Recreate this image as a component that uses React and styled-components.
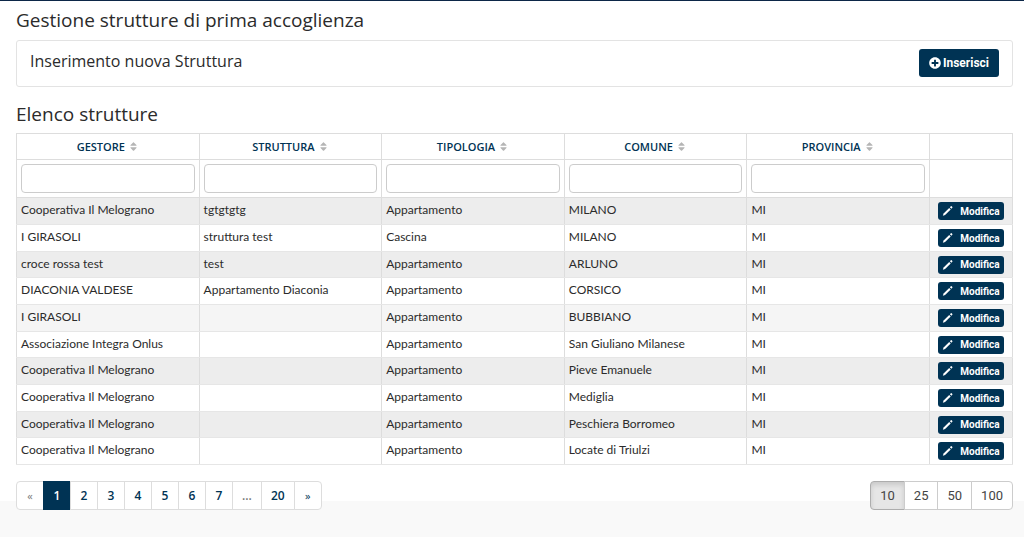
import React from 'react';
import styled, { createGlobalStyle } from 'styled-components';
import { FaPlusCircle, FaSort } from 'react-icons/fa';

const GlobalStyle = createGlobalStyle`
* {
  box-sizing: border-box;
}
body {
  margin: 0;
  background-color: #f9f9f9;
  font-family: "Open Sans", sans-serif;
  color: #2b2b2b;
}
`

const Page = styled.main`
border-top: 1px solid #0c2748;
background: linear-gradient(#fff, #fff) no-repeat top / 100% calc(100% - 9px);
padding: 8px 11px 0 16px;
`

const Title = styled.h1`
margin: 0;
font-size: 19px;
line-height: 23px;
font-weight: 400;
`

const ListTitle = styled(Title).attrs({ as: 'h2' })`
margin: 16px 0 7px;
`

const Panel = styled.section`
display: flex;
justify-content: space-between;
align-items: flex-start;
margin-top: 8px;
padding: 8px 13px 9px;
border: 1px solid #e3e3e3;
border-radius: 3px;
`

const PanelTitle = styled.h2`
margin: 0;
font-size: 16px;
line-height: 25px;
font-weight: 400;
`

const DarkButton = styled.button`
display: inline-flex;
align-items: center;
justify-content: center;
gap: ${props => props.$small ? '6px' : '2px'};
height: ${props => props.$small ? '18px' : '28px'};
padding: ${props => props.$small ? '0 4px' : '0 10px'};
border: 0;
border-radius: 3px;
background-color: #003354;
color: #fff;
font-family: Roboto, sans-serif;
font-size: ${props => props.$small ? '10px' : '12px'};
font-weight: 700;
cursor: pointer;
`

const Table = styled.table`
width: 100%;
table-layout: fixed;
border-collapse: collapse;
border: 1px solid #ddd;
font-family: Lato, sans-serif;
font-size: 12px;
line-height: 16px;
`

const HeaderCell = styled.th`
width: ${props => props.$action ? '83px' : 'auto'};
height: 26px;
padding: 0 4px;
border: 1px solid #ddd;
`

const SortButton = styled.button`
display: inline-flex;
align-items: center;
gap: 3px;
padding: 0;
border: 0;
background: none;
color: #003354;
font-family: "Open Sans", sans-serif;
font-size: 11px;
line-height: 16px;
font-weight: 600;
text-transform: uppercase;
cursor: pointer;
svg {
  color: #b5b5b5;
}
`

const FilterCell = styled.td`
height: 38px;
padding: 0 4px;
border: 1px solid #ddd;
`

const FilterInput = styled.input`
display: block;
width: 100%;
height: 29px;
padding: 0 8px;
border: 1px solid #ccc;
border-radius: 4px;
background-color: #fff;
font: inherit;
`

// rows alternate between 27px and 26px so that ten of them fill 267px
const Row = styled.tr`
height: 27px;
background-color: ${props => props.$hovered ? '#f5f5f5' : '#fff'};
&:nth-child(odd) {
  background-color: ${props => props.$hovered ? '#f5f5f5' : '#ededed'};
}
&:nth-child(3n) {
  height: 26px;
}
`

const Cell = styled.td`
padding: 0 4px 2px;
border: 1px solid #ddd;
border-top-color: #e6e6e6;
border-bottom-color: #e6e6e6;
vertical-align: middle;
white-space: nowrap;
`

const ActionCell = styled(Cell)`
padding: 0 4px;
text-align: center;
button {
  vertical-align: middle;
}
`

const Footer = styled.footer`
display: flex;
justify-content: space-between;
margin-top: 16px;
`

const PageList = styled.ul`
display: flex;
margin: 0;
padding: 0;
list-style: none;
`

const PageLink = styled.a`
display: block;
min-width: 28px;
height: 29px;
margin-right: -1px;
padding: 0 9px;
border: 1px solid ${props => props.$active ? '#003354' : '#ddd'};
border-radius: ${props => props.$edge === 'first' ? '4px 0 0 4px' : props.$edge === 'last' ? '0 4px 4px 0' : '0'};
background-color: ${props => props.$active ? '#003354' : '#fff'};
color: ${props => props.$active ? '#fff' : props.$muted ? '#777' : '#003354'};
font-size: ${props => props.$edge ? '11px' : '12px'};
line-height: 27px;
font-weight: ${props => props.$edge ? '400' : '600'};
text-align: center;
text-decoration: none;
`

const SizeGroup = styled.div`
display: flex;
`

const SizeButton = styled.button`
height: 29px;
margin-left: -1px;
padding: 0 9px;
border: 1px solid ${props => props.$active ? '#adadad' : '#ccc'};
background-color: ${props => props.$active ? '#e6e6e6' : '#fff'};
box-shadow: ${props => props.$active ? 'inset 0 3px 5px rgba(0, 0, 0, 0.125)' : 'none'};
color: #444;
font-family: Roboto, sans-serif;
font-size: 13px;
cursor: pointer;
&:first-child {
  border-radius: 4px 0 0 4px;
}
&:last-child {
  border-radius: 0 4px 4px 0;
}
`

const columns = ['Gestore', 'Struttura', 'Tipologia', 'Comune', 'Provincia']

const strutture = [
    ['Cooperativa Il Melograno', 'tgtgtgtg', 'Appartamento', 'MILANO', 'MI'],
    ['I GIRASOLI', 'struttura test', 'Cascina', 'MILANO', 'MI'],
    ['croce rossa test', 'test', 'Appartamento', 'ARLUNO', 'MI'],
    ['DIACONIA VALDESE', 'Appartamento Diaconia', 'Appartamento', 'CORSICO', 'MI'],
    ['I GIRASOLI', '', 'Appartamento', 'BUBBIANO', 'MI'],
    ['Associazione Integra Onlus', '', 'Appartamento', 'San Giuliano Milanese', 'MI'],
    ['Cooperativa Il Melograno', '', 'Appartamento', 'Pieve Emanuele', 'MI'],
    ['Cooperativa Il Melograno', '', 'Appartamento', 'Mediglia', 'MI'],
    ['Cooperativa Il Melograno', '', 'Appartamento', 'Peschiera Borromeo', 'MI'],
    ['Cooperativa Il Melograno', '', 'Appartamento', 'Locate di Triulzi', 'MI'],
]

const pages = ['«', '1', '2', '3', '4', '5', '6', '7', '...', '20', '»']
const sizes = [10, 25, 50, 100]

function PencilIcon() {
    return (
        <svg width="12" height="12" viewBox="0 0 12 12" fill="currentColor" aria-hidden="true">
            <path d="M.8 10.7l.8-2.3 5.6-5.5 1.5 1.5-5.6 5.5z" />
            <path d="M7.9 2.2l.9-.9a.7.7 0 0 1 .9 0l.6.6a.7.7 0 0 1 0 .9l-.9.9z" />
        </svg>
    )
}

function Pagination(props) {
    return (
        <nav aria-label="Pagine">
            <PageList>
                {pages.map((item, index) => (
                    <li key={index}>
                        <PageLink
                            href="#"
                            $active={item === props.current}
                            $muted={item === '«' || item === '...'}
                            $edge={index === 0 ? 'first' : index === pages.length - 1 ? 'last' : ''}>
                            {item}
                        </PageLink>
                    </li>
                ))}
            </PageList>
        </nav>
    )
}

function App() {
    const [size, setSize] = React.useState(10);

    return (
        <>
            <GlobalStyle />
            <Page>
                <Title>Gestione strutture di prima accoglienza</Title>
                <Panel>
                    <PanelTitle>Inserimento nuova Struttura</PanelTitle>
                    <DarkButton type="button">
                        <FaPlusCircle size={12} />
                        Inserisci
                    </DarkButton>
                </Panel>

                <ListTitle>Elenco strutture</ListTitle>
                <Table>
                    <thead>
                        <tr>
                            {columns.map(name => (
                                <HeaderCell key={name} scope="col">
                                    <SortButton type="button">
                                        {name}
                                        <FaSort size={11} />
                                    </SortButton>
                                </HeaderCell>
                            ))}
                            <HeaderCell $action />
                        </tr>
                        <tr>
                            {columns.map(name => (
                                <FilterCell key={name}>
                                    <FilterInput type="text" aria-label={name} />
                                </FilterCell>
                            ))}
                            <FilterCell />
                        </tr>
                    </thead>
                    <tbody>
                        {strutture.map((row, index) => (
                            <Row key={index} $hovered={index === 4}>
                                {row.map((value, i) => (
                                    <Cell key={i}>{value}</Cell>
                                ))}
                                <ActionCell>
                                    <DarkButton type="button" $small>
                                        <PencilIcon />
                                        Modifica
                                    </DarkButton>
                                </ActionCell>
                            </Row>
                        ))}
                    </tbody>
                </Table>

                <Footer>
                    <Pagination current="1" />
                    <SizeGroup role="group" aria-label="Righe per pagina">
                        {sizes.map(item => (
                            <SizeButton key={item} type="button" $active={item === size}
                                onClick={() => setSize(item)}>
                                {item}
                            </SizeButton>
                        ))}
                    </SizeGroup>
                </Footer>
            </Page>
        </>
    )
}

export default App;
